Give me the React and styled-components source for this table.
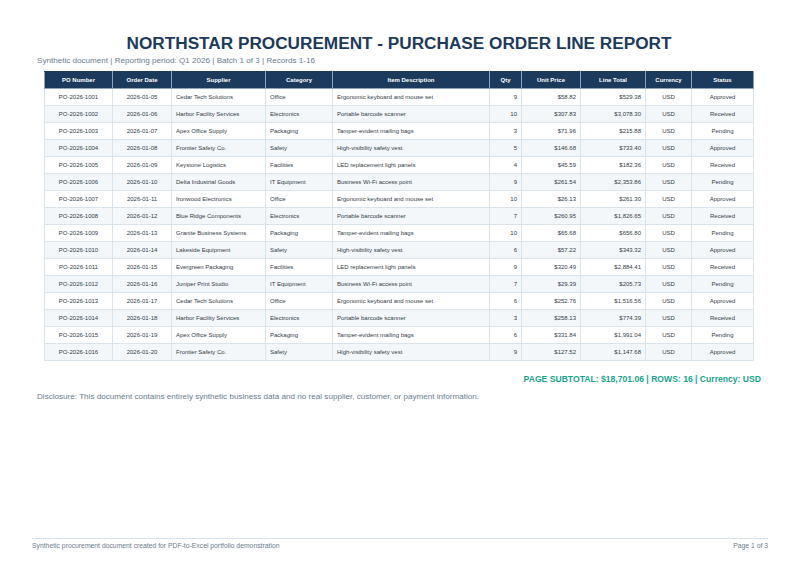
import React from "react";
import styled, { createGlobalStyle } from "styled-components";

const GlobalStyle = createGlobalStyle`
  html, body {
    margin: 0;
    padding: 0;
    background: #ffffff;
  }
  body {
    font-family: "Liberation Sans", Arial, sans-serif;
  }
`;

const columns = [
  { key: "po", label: "PO Number", width: 68, align: "center" },
  { key: "date", label: "Order Date", width: 59, align: "center" },
  { key: "supplier", label: "Supplier", width: 94, align: "left" },
  { key: "category", label: "Category", width: 67, align: "left" },
  { key: "item", label: "Item Description", width: 157, align: "left" },
  { key: "qty", label: "Qty", width: 32, align: "right" },
  { key: "unit", label: "Unit Price", width: 59, align: "right" },
  { key: "total", label: "Line Total", width: 65, align: "right" },
  { key: "currency", label: "Currency", width: 46, align: "center" },
  { key: "status", label: "Status", width: 62, align: "center" },
];

const rows = [
  ["PO-2026-1001", "2026-01-05", "Cedar Tech Solutions", "Office", "Ergonomic keyboard and mouse set", "9", "$58.82", "$529.38", "USD", "Approved"],
  ["PO-2026-1002", "2026-01-06", "Harbor Facility Services", "Electronics", "Portable barcode scanner", "10", "$307.83", "$3,078.30", "USD", "Received"],
  ["PO-2026-1003", "2026-01-07", "Apex Office Supply", "Packaging", "Tamper-evident mailing bags", "3", "$71.96", "$215.88", "USD", "Pending"],
  ["PO-2026-1004", "2026-01-08", "Frontier Safety Co.", "Safety", "High-visibility safety vest", "5", "$146.68", "$733.40", "USD", "Approved"],
  ["PO-2026-1005", "2026-01-09", "Keystone Logistics", "Facilities", "LED replacement light panels", "4", "$45.59", "$182.36", "USD", "Received"],
  ["PO-2026-1006", "2026-01-10", "Delta Industrial Goods", "IT Equipment", "Business Wi-Fi access point", "9", "$261.54", "$2,353.86", "USD", "Pending"],
  ["PO-2026-1007", "2026-01-11", "Ironwood Electronics", "Office", "Ergonomic keyboard and mouse set", "10", "$26.13", "$261.30", "USD", "Approved"],
  ["PO-2026-1008", "2026-01-12", "Blue Ridge Components", "Electronics", "Portable barcode scanner", "7", "$260.95", "$1,826.65", "USD", "Received"],
  ["PO-2026-1009", "2026-01-13", "Granite Business Systems", "Packaging", "Tamper-evident mailing bags", "10", "$65.68", "$656.80", "USD", "Pending"],
  ["PO-2026-1010", "2026-01-14", "Lakeside Equipment", "Safety", "High-visibility safety vest", "6", "$57.22", "$343.32", "USD", "Approved"],
  ["PO-2026-1011", "2026-01-15", "Evergreen Packaging", "Facilities", "LED replacement light panels", "9", "$320.49", "$2,884.41", "USD", "Received"],
  ["PO-2026-1012", "2026-01-16", "Juniper Print Studio", "IT Equipment", "Business Wi-Fi access point", "7", "$29.39", "$205.73", "USD", "Pending"],
  ["PO-2026-1013", "2026-01-17", "Cedar Tech Solutions", "Office", "Ergonomic keyboard and mouse set", "6", "$252.76", "$1,516.56", "USD", "Approved"],
  ["PO-2026-1014", "2026-01-18", "Harbor Facility Services", "Electronics", "Portable barcode scanner", "3", "$258.13", "$774.39", "USD", "Received"],
  ["PO-2026-1015", "2026-01-19", "Apex Office Supply", "Packaging", "Tamper-evident mailing bags", "6", "$331.84", "$1,991.04", "USD", "Pending"],
  ["PO-2026-1016", "2026-01-20", "Frontier Safety Co.", "Safety", "High-visibility safety vest", "9", "$127.52", "$1,147.68", "USD", "Approved"],
];

function App() {
  return (
    <Page>
      <GlobalStyle />
      <Content>
        <Title>NORTHSTAR PROCUREMENT - PURCHASE ORDER LINE REPORT</Title>
        <Subtitle>
          Synthetic document | Reporting period: Q1 2026 | Batch 1 of 3 | Records 1-16
        </Subtitle>
        <Table>
          <colgroup>
            {columns.map((c) => (
              <col key={c.key} style={{ width: c.width }} />
            ))}
          </colgroup>
          <thead>
            <tr>
              {columns.map((c) => (
                <HeadCell key={c.key}>{c.label}</HeadCell>
              ))}
            </tr>
          </thead>
          <tbody>
            {rows.map((row, i) => (
              <Row key={row[0]} $striped={i % 2 === 1}>
                {row.map((value, j) => (
                  <Cell key={columns[j].key} $align={columns[j].align}>
                    {value}
                  </Cell>
                ))}
              </Row>
            ))}
          </tbody>
        </Table>
        <Subtotal>PAGE SUBTOTAL: $18,701.06 | ROWS: 16 | Currency: USD</Subtotal>
        <Disclosure>
          Disclosure: This document contains entirely synthetic business data and no real
          supplier, customer, or payment information.
        </Disclosure>
      </Content>
      <Footer>
        <span>Synthetic procurement document created for PDF-to-Excel portfolio demonstration</span>
        <span>Page 1 of 3</span>
      </Footer>
    </Page>
  );
}

export default App;

const Page = styled.div`
  display: flex;
  flex-direction: column;
  min-height: 566px;
  box-sizing: border-box;
`;

const Content = styled.div`
  display: flex;
  flex-direction: column;
  padding: 35px 39px 0 37px;
`;

const Title = styled.h1`
  margin: 0;
  text-align: center;
  font-size: 17.2px;
  line-height: 1;
  font-weight: bold;
  color: #1b3a5c;
`;

const Subtitle = styled.div`
  margin-top: 4px;
  font-size: 8.1px;
  line-height: 10px;
  color: #6b7c8e;
`;

const Table = styled.table`
  width: 709px;
  margin: 5px auto 0;
  border-collapse: collapse;
  table-layout: fixed;
  border: 1px solid #c3d0dc;
  font-size: 6px;
  color: #333d47;
`;

const HeadCell = styled.th`
  height: 16px;
  padding: 0 3px;
  background: #1b3a5c;
  color: #ffffff;
  font-weight: bold;
  text-align: center;
  border: 1px solid #8ea3b8;
  border-top-color: #1b3a5c;
  white-space: nowrap;
`;

const Row = styled.tr`
  background: ${(p) => (p.$striped ? "#f3f7fa" : "#ffffff")};
`;

const Cell = styled.td`
  height: 16px;
  padding: 0 4px;
  text-align: ${(p) => p.$align};
  border: 1px solid #dbe3eb;
  white-space: nowrap;
  overflow: hidden;
`;

const Subtotal = styled.div`
  margin-top: 13px;
  text-align: right;
  font-size: 8.6px;
  line-height: 10px;
  font-weight: bold;
  color: #17a589;
`;

const Disclosure = styled.div`
  margin-top: 8px;
  font-size: 8.1px;
  line-height: 10px;
  color: #6b7c8e;
`;

const Footer = styled.div`
  margin: auto 32px 0;
  margin-bottom: 16px;
  padding-top: 3px;
  border-top: 1px solid #d6e2ec;
  display: flex;
  justify-content: space-between;
  font-size: 6.8px;
  line-height: 8px;
  color: #6b7c8e;
`;
